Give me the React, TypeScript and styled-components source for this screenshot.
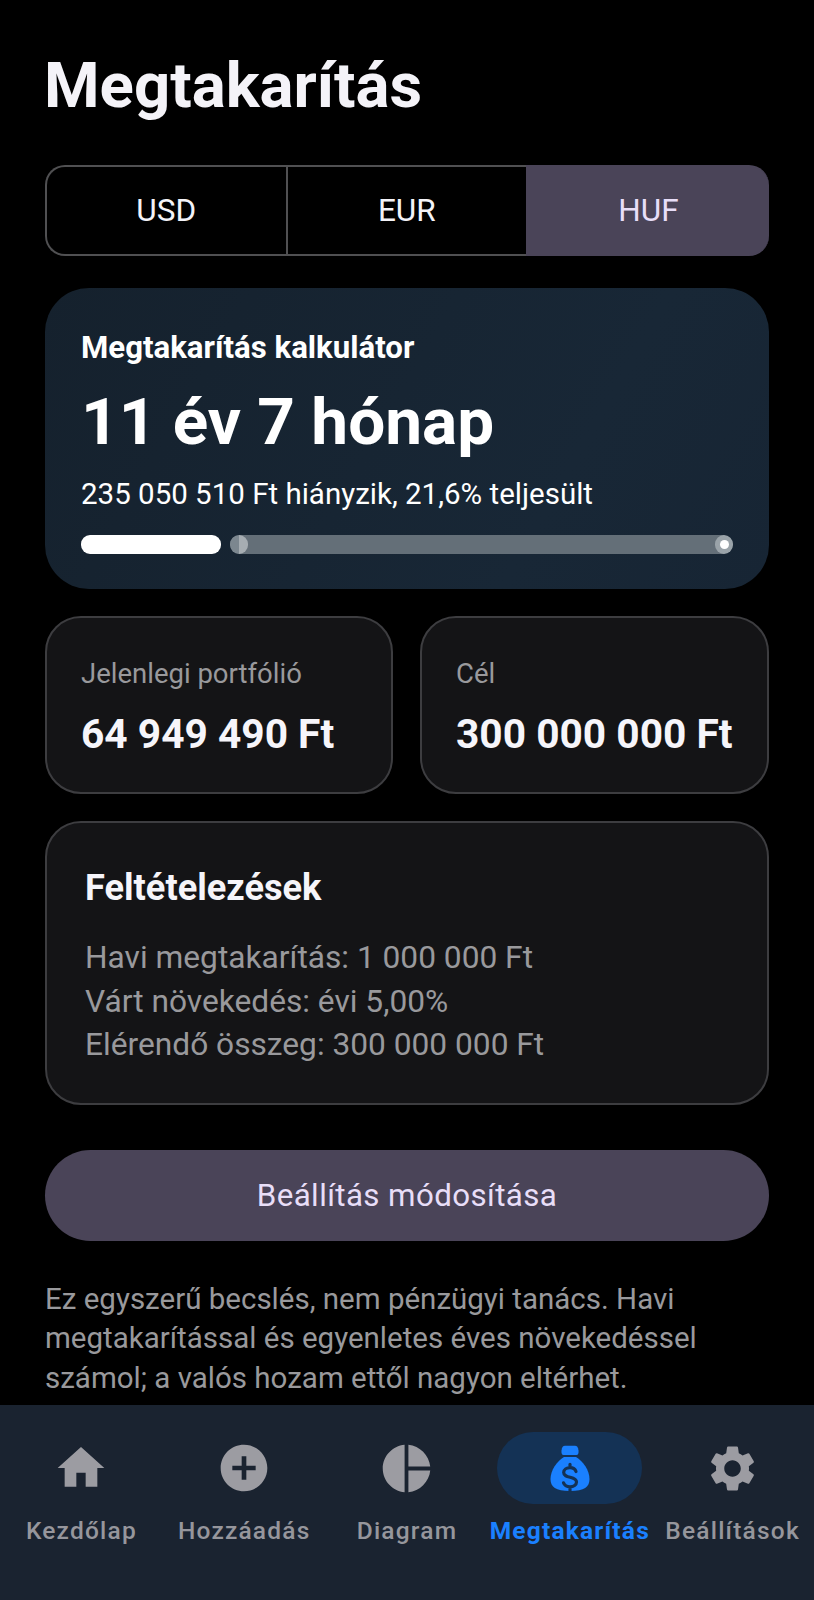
import React, { FC, ReactNode } from "react";
import styled, { createGlobalStyle } from "styled-components";
import { MdHome, MdAddCircle, MdSettings } from "react-icons/md";

const GlobalStyle = createGlobalStyle`
  html, body {
    margin: 0;
    padding: 0;
    background: #000;
  }
  body {
    font-family: Roboto, "Liberation Sans", sans-serif;
  }
`;

const PieIcon: FC = () => (
  <svg width="57" height="57" viewBox="0 0 24 24" fill="currentColor">
    <path d="M11.200 2v20c-5.100-.5-9.200-4.800-9.200-10s4.100-9.500 9.200-10zm1.600 0v9.200H22c-.5-4.800-4.400-8.700-9.200-9.200zm0 10.800V22c4.800-.5 8.700-4.400 9.200-9.200h-9.200z" />
  </svg>
);

const BagIcon: FC = () => (
  <svg width="56" height="56" viewBox="0 0 56 56" fill="none">
    <path
      d="M23 5.700h10c2 0 3 1.300 3.500 4.800.3 2.700-.3 4.500-2 4.500H21.500c-1.700 0-2.300-1.800-2-4.500.5-3.500 1.500-4.800 3.500-4.800z"
      fill="#1a80ff"
    />
    <path
      d="M22 17h12c7 4.500 13.500 13 13.500 22 0 8-5 12-19.500 12S8.500 47 8.500 39c0-9 6.500-17.500 13.500-22z"
      fill="#1a80ff"
    />
    <path
      d="M34 31.500c-.8-2.400-3.200-3.800-6-3.800-3.500 0-6.300 1.900-6.300 4.700 0 6.500 12.800 3.300 12.800 9.700 0 2.900-2.900 4.700-6.500 4.700-3 0-5.600-1.400-6.500-4M28 24.300v3.400M28 47v3.400"
      stroke="#143255"
      strokeWidth="3.200"
      strokeLinecap="round"
    />
  </svg>
);

type NavProps = {
  label: string;
  active?: boolean;
  children: ReactNode;
};
const NavEntry: FC<NavProps> = ({ label, active, children }) => (
  <NavItem>
    <NavIconWrap $active={active}>{children}</NavIconWrap>
    <NavLabel $active={active}>{label}</NavLabel>
  </NavItem>
);

export default function App() {
  return (
    <Page>
      <GlobalStyle />
      <Content>
        <Title>Megtakarítás</Title>
        <Segments>
          <Segment>USD</Segment>
          <Segment>EUR</Segment>
          <Segment $selected>HUF</Segment>
        </Segments>
        <Hero>
          <HeroLabel>Megtakarítás kalkulátor</HeroLabel>
          <HeroValue>11 év 7 hónap</HeroValue>
          <HeroSub>235 050 510 Ft hiányzik, 21,6% teljesült</HeroSub>
          <Progress>
            <ProgressDone />
            <ProgressRest>
              <RestStart />
              <RestEnd>
                <RestDot />
              </RestEnd>
            </ProgressRest>
          </Progress>
        </Hero>
        <Stats>
          <StatCard>
            <StatLabel>Jelenlegi portfólió</StatLabel>
            <StatValue>64 949 490 Ft</StatValue>
          </StatCard>
          <StatCard>
            <StatLabel>Cél</StatLabel>
            <StatValue>300 000 000 Ft</StatValue>
          </StatCard>
        </Stats>
        <Assumptions>
          <AssumptionsTitle>Feltételezések</AssumptionsTitle>
          <AssumptionLine>Havi megtakarítás: 1 000 000 Ft</AssumptionLine>
          <AssumptionLine>Várt növekedés: évi 5,00%</AssumptionLine>
          <AssumptionLine>Elérendő összeg: 300 000 000 Ft</AssumptionLine>
        </Assumptions>
        <EditButton>Beállítás módosítása</EditButton>
        <Disclaimer>
          Ez egyszerű becslés, nem pénzügyi tanács. Havi megtakarítással és
          egyenletes éves növekedéssel számol; a valós hozam ettől nagyon
          eltérhet.
        </Disclaimer>
      </Content>
      <BottomNav>
        <NavEntry label="Kezdőlap">
          <MdHome size={56} />
        </NavEntry>
        <NavEntry label="Hozzáadás">
          <MdAddCircle size={56} />
        </NavEntry>
        <NavEntry label="Diagram">
          <PieIcon />
        </NavEntry>
        <NavEntry label="Megtakarítás" active>
          <BagIcon />
        </NavEntry>
        <NavEntry label="Beállítások">
          <MdSettings size={55} />
        </NavEntry>
      </BottomNav>
    </Page>
  );
}

const Page = styled.div`
  width: 814px;
  height: 1600px;
  background: #000;
  display: flex;
  flex-direction: column;
  overflow: hidden;
`;
const Content = styled.main`
  height: 1405px;
  flex: none;
  box-sizing: border-box;
  padding: 44px 45px 0 45px;
  overflow: hidden;
`;
const Title = styled.h1`
  margin: 0 0 0 -1px;
  font-size: 63.5px;
  line-height: 84px;
  font-weight: 700;
  color: #f4f3f8;
`;
const Segments = styled.div`
  display: flex;
  height: 91px;
  margin-top: 37px;
`;
const Segment = styled.div<{ $selected?: boolean }>`
  flex: ${(p) => (p.$selected ? "0 0 243px" : "1 1 0")};
  box-sizing: border-box;
  display: flex;
  align-items: center;
  justify-content: center;
  font-size: 31.5px;
  border: 2.5px solid ${(p) => (p.$selected ? "#4a4458" : "#505052")};
  border-right: none;
  color: ${(p) => (p.$selected ? "#e8def8" : "#f4f3f8")};
  background: ${(p) => (p.$selected ? "#4a4458" : "transparent")};
  &:first-child {
    border-radius: 20px 0 0 20px;
  }
  &:last-child {
    border-radius: 0 20px 20px 0;
  }
`;
const Hero = styled.section`
  margin-top: 32px;
  height: 301px;
  box-sizing: border-box;
  padding: 41px 36px 0;
  border-radius: 44px;
  background: linear-gradient(120deg, #15212d 0%, #182736 70%, #172534 100%);
  color: #fff;
`;
const HeroLabel = styled.div`
  font-size: 31.2px;
  line-height: 38px;
  font-weight: 700;
`;
const HeroValue = styled.div`
  margin-top: 15px;
  font-size: 65.7px;
  line-height: 80px;
  font-weight: 700;
`;
const HeroSub = styled.div`
  margin-top: 13px;
  font-size: 29.5px;
  line-height: 38px;
`;
const Progress = styled.div`
  display: flex;
  gap: 9px;
  height: 19px;
  margin-top: 22px;
`;
const ProgressDone = styled.div`
  width: 140px;
  border-radius: 9px;
  background: #fff;
`;
const ProgressRest = styled.div`
  flex: 1;
  display: flex;
  justify-content: space-between;
  border-radius: 9px;
  background: #646f78;
  overflow: hidden;
`;
const RestStart = styled.div`
  width: 18px;
  background: linear-gradient(90deg, #7c878f 0 50%, #a6adb2 50% 100%);
  border-radius: 9px;
`;
const RestEnd = styled.div`
  width: 18px;
  display: flex;
  align-items: center;
  justify-content: center;
  background: #9aa3a9;
  border-radius: 9px;
`;
const RestDot = styled.div`
  width: 9px;
  height: 9px;
  border-radius: 50%;
  background: #fff;
`;
const Stats = styled.div`
  display: grid;
  grid-template-columns: 348px 349px;
  justify-content: space-between;
  margin-top: 27px;
`;
const StatCard = styled.div`
  height: 178px;
  box-sizing: border-box;
  padding: 38px 34px 0;
  background: #141416;
  border: 2.5px solid #3d3d40;
  border-radius: 36px;
  white-space: nowrap;
`;
const StatLabel = styled.div`
  font-size: 27.5px;
  line-height: 36px;
  color: #99999c;
`;
const StatValue = styled.div`
  margin-top: 18px;
  font-size: 40.7px;
  line-height: 48px;
  font-weight: 700;
  color: #f6f5fa;
`;
const Assumptions = styled.section`
  margin-top: 27px;
  height: 284px;
  box-sizing: border-box;
  padding: 43px 38px 0;
  background: #141416;
  border: 2.5px solid #3d3d40;
  border-radius: 36px;
`;
const AssumptionsTitle = styled.h2`
  margin: 0 0 26px;
  font-size: 36.2px;
  line-height: 44px;
  font-weight: 700;
  color: #f6f5fa;
`;
const AssumptionLine = styled.div`
  font-size: 31.7px;
  line-height: 43.6px;
  color: #99999c;
`;
const EditButton = styled.button`
  display: block;
  width: 100%;
  height: 91px;
  margin-top: 45px;
  border: none;
  border-radius: 46px;
  background: #4a4458;
  color: #e8def8;
  font-family: inherit;
  font-size: 31.3px;
  letter-spacing: 0.4px;
`;
const Disclaimer = styled.p`
  margin: 39px 0 0;
  font-size: 29.5px;
  line-height: 39.3px;
  color: #99999c;
`;
const BottomNav = styled.nav`
  flex: 1;
  display: grid;
  grid-template-columns: repeat(5, 1fr);
  background: #1a2330;
  padding-top: 27px;
`;
const NavItem = styled.div`
  display: flex;
  flex-direction: column;
  align-items: center;
  min-width: 0;
`;
const NavIconWrap = styled.div<{ $active?: boolean }>`
  width: 145px;
  height: 72px;
  flex: none;
  display: flex;
  align-items: center;
  justify-content: center;
  border-radius: 36px;
  color: #9c9ca2;
  background: ${(p) => (p.$active ? "#143255" : "transparent")};
`;
const NavLabel = styled.div<{ $active?: boolean }>`
  margin-top: 11px;
  font-size: 24.5px;
  line-height: 32px;
  letter-spacing: 1.2px;
  white-space: nowrap;
  font-weight: ${(p) => (p.$active ? 700 : 500)};
  color: ${(p) => (p.$active ? "#1a80ff" : "#96969c")};
`;
